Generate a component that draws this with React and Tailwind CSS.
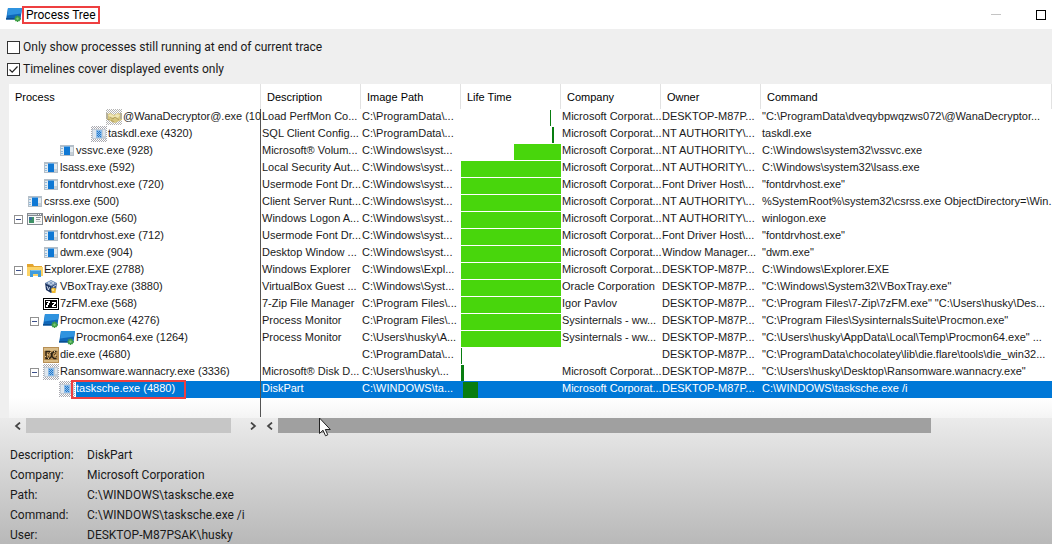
import React from "react";

const MS = "Microsoft Corporat...";
const NT = "NT AUTHORITY\\...";
const DESK = "DESKTOP-M87P...";
const SYST = "C:\\Windows\\syst...";

// bar: [start %, width %] of the displayed time range
const rows = [
  { level: 5, icon: "hands", name: "@WanaDecryptor@.exe (10", desc: "Load PerfMon Co...", path: "C:\\ProgramData\\...", bar: [89, 1], dark: true, company: MS, owner: DESK, cmd: "\"C:\\ProgramData\\dveqybpwqzws072\\@WanaDecryptor..." },
  { level: 4, icon: "ghost", name: "taskdl.exe (4320)", desc: "SQL Client Config...", path: "C:\\ProgramData\\...", bar: [91, 2], dark: true, company: MS, owner: NT, cmd: "taskdl.exe" },
  { level: 2, icon: "app", name: "vssvc.exe (928)", desc: "Microsoft® Volum...", path: SYST, bar: [53, 47], company: MS, owner: NT, cmd: "C:\\Windows\\system32\\vssvc.exe" },
  { level: 1, icon: "app", name: "lsass.exe (592)", desc: "Local Security Aut...", path: SYST, bar: [0, 100], company: MS, owner: NT, cmd: "C:\\Windows\\system32\\lsass.exe" },
  { level: 1, icon: "app", name: "fontdrvhost.exe (720)", desc: "Usermode Font Dr...", path: SYST, bar: [0, 100], company: MS, owner: "Font Driver Host\\...", cmd: "\"fontdrvhost.exe\"" },
  { level: 0, icon: "app", name: "csrss.exe (500)", desc: "Client Server Runt...", path: SYST, bar: [0, 100], company: MS, owner: NT, cmd: "%SystemRoot%\\system32\\csrss.exe ObjectDirectory=\\Win..." },
  { level: 0, open: true, icon: "logon", name: "winlogon.exe (560)", desc: "Windows Logon A...", path: SYST, bar: [0, 100], company: MS, owner: NT, cmd: "winlogon.exe" },
  { level: 1, icon: "app", name: "fontdrvhost.exe (712)", desc: "Usermode Font Dr...", path: SYST, bar: [0, 100], company: MS, owner: "Font Driver Host\\...", cmd: "\"fontdrvhost.exe\"" },
  { level: 1, icon: "app", name: "dwm.exe (904)", desc: "Desktop Window ...", path: SYST, bar: [0, 100], company: MS, owner: "Window Manager...", cmd: "\"dwm.exe\"" },
  { level: 0, open: true, icon: "folder", name: "Explorer.EXE (2788)", desc: "Windows Explorer", path: "C:\\Windows\\Expl...", bar: [0, 100], company: MS, owner: DESK, cmd: "C:\\Windows\\Explorer.EXE" },
  { level: 1, icon: "vbox", name: "VBoxTray.exe (3880)", desc: "VirtualBox Guest ...", path: "C:\\Windows\\Syst...", bar: [0, 100], company: "Oracle Corporation", owner: DESK, cmd: "\"C:\\Windows\\System32\\VBoxTray.exe\"" },
  { level: 1, icon: "zip", name: "7zFM.exe (568)", desc: "7-Zip File Manager", path: "C:\\Program Files\\...", bar: [0, 100], company: "Igor Pavlov", owner: DESK, cmd: "\"C:\\Program Files\\7-Zip\\7zFM.exe\" \"C:\\Users\\husky\\Des..." },
  { level: 1, open: true, icon: "procmon", name: "Procmon.exe (4276)", desc: "Process Monitor", path: "C:\\Program Files\\...", bar: [0, 100], company: "Sysinternals - ww...", owner: DESK, cmd: "\"C:\\Program Files\\SysinternalsSuite\\Procmon.exe\"" },
  { level: 2, icon: "procmon", name: "Procmon64.exe (1264)", desc: "Process Monitor", path: "C:\\Users\\husky\\A...", bar: [0, 100], company: "Sysinternals - ww...", owner: DESK, cmd: "\"C:\\Users\\husky\\AppData\\Local\\Temp\\Procmon64.exe\" ..." },
  { level: 1, icon: "die", name: "die.exe (4680)", desc: "", path: "C:\\ProgramData\\...", bar: [0, 1], dark: true, company: "", owner: DESK, cmd: "\"C:\\ProgramData\\chocolatey\\lib\\die.flare\\tools\\die_win32..." },
  { level: 1, open: true, icon: "ghost", name: "Ransomware.wannacry.exe (3336)", desc: "Microsoft® Disk D...", path: "C:\\Users\\husky\\...", bar: [0, 3], dark: true, company: MS, owner: DESK, cmd: "\"C:\\Users\\husky\\Desktop\\Ransomware.wannacry.exe\"" },
  { level: 2, icon: "ghost", selected: true, name: "tasksche.exe (4880)", desc: "DiskPart", path: "C:\\WINDOWS\\ta...", bar: [2, 15], dark: true, company: MS, owner: DESK, cmd: "C:\\WINDOWS\\tasksche.exe /i" },
];

const indents = ["pl-[18px]", "pl-[34px]", "pl-[50px]", "pl-[66px]", "pl-[82px]", "pl-[97px]"];

function Dither() {
  return (
    <>
      <defs>
        <pattern id="dither" width="2" height="2" patternUnits="userSpaceOnUse">
          <path fill="#fff" d="M0 0h1v1H0zM1 1h1v1H1z" />
        </pattern>
      </defs>
      <path fill="url(#dither)" d="M0 0h16v16H0z" />
    </>
  );
}

function Icon({ kind }) {
  return (
    <svg className="size-4 shrink-0" viewBox="0 0 16 16" shapeRendering="crispEdges" aria-hidden="true">
      {kind === "app" && (
        <>
          <path fill="#b4bfc9" d="M1 2h14v11H1z" />
          <path fill="#e3ebf1" d="M2 4h3v8H2zM11 4h3v5h-3z" />
          <path fill="#8fb9dc" d="M2 5h2v1H2zM2 8h2v1H2zM2 10h2v1H2z" />
          <path fill="#c5ced6" d="M11 9h3v3h-3z" />
          <path fill="#0f78d4" d="M5 4h6v8H5z" />
          <path fill="#6aa9e0" d="M5 3h6v1H5z" />
        </>
      )}
      {kind === "ghost" && (
        <>
          <path fill="#a9a9b0" d="M0 0h16v16H0z" />
          <Dither />
          <path fill="#c3ccd6" d="M1 3h14v10H1z" />
          <path fill="#dfe7ee" d="M2 4h3v8H2zM12 4h2v6h-2z" />
          <path fill="#8ebce8" d="M5 4h6v8H5z" />
          <path fill="#1f78cc" d="M6 5h1v1H6zM8 5h1v1H8zM7 6h1v1H7zM9 6h1v1H9zM6 7h1v1H6zM8 7h1v1H8zM7 8h1v1H7zM9 8h1v1H9zM6 9h1v1H6zM8 9h1v1H8zM7 10h1v1H7zM9 10h1v1H9z" />
        </>
      )}
      {kind === "hands" && (
        <g shapeRendering="auto">
          <path fill="#b4b4b4" d="M0 0h16v16H0z" />
          <Dither />
          <path fill="#d6c67e" d="M0 6l4-2 4 2 4-2 4 2v5l-3 1-4 2-3-1-3-2-3-1z" />
          <path fill="#efe6b4" d="M2 6l3-1 3 2 3-2 3 1-2 3-4-1-3 1z" />
          <path stroke="#a08e50" strokeWidth=".7" fill="none" d="M4 8l3 2 2-2 4 3M5 11l3 2M1 10l3 1" />
          <path fill="#b5b09a" d="M0 4h2v6H0zM14 4h2v6h-2z" />
        </g>
      )}
      {kind === "logon" && (
        <>
          <path fill="#858b91" d="M0 2h16v12H0z" />
          <path fill="#f8f8f8" d="M1 5h14v8H1z" />
          <path fill="#d3d8dc" d="M1 3h9v1H1z" />
          <path fill="#fff" d="M11 3h1v1h-1zM13 3h1v1h-1z" />
          <path fill="#3e9166" d="M2 6h5v6H2z" />
          <path fill="#376f9b" d="M2 6h3v3H2z" />
          <path fill="#8b9197" d="M9 6h5v1H9zM9 8h4v1H9z" />
          <path fill="#cdd1d4" d="M9 10h5v1H9z" />
        </>
      )}
      {kind === "folder" && (
        <g shapeRendering="auto">
          <path fill="#e3a52f" d="M0 2h6l1 2h8v3H0z" />
          <path fill="#fbd367" d="M0 5h16v9H0z" />
          <path fill="#3f9bdc" d="M3 9q0-1 1-1h9q1 0 1 1v6h-3v-3H6v3H3z" />
          <path fill="#77bdec" d="M4 8h9v1H4z" />
        </g>
      )}
      {kind === "vbox" && (
        <g shapeRendering="auto">
          <path fill="#7291ba" d="M8 1l6 3-6 3-6-3z" />
          <path fill="#1d3562" d="M2 4l6 3v7l-5-3z" />
          <path fill="#3b5687" d="M14 4L8 7v7l5-3z" />
          <path stroke="#d9e3f2" strokeWidth=".9" fill="none" d="M4 7l1.500 4L6.500 8M5 4l3-1.500L11 4 8 5.500zM10 8l3-2" />
          <path fill="#f0bb2f" d="M8 10l2-1.500 3 1L12.500 14H9z" />
          <path fill="#fbe187" d="M9 10h2v2H9z" />
        </g>
      )}
      {kind === "zip" && (
        <>
          <path d="M0 2h16v12H0z" />
          <path fill="#fff" d="M1 3h14v10H1z" />
          <path d="M2 4h12v8H2z" />
          <path fill="#fff" d="M3 5h4v2H6v2H5v2H3V9h1V7h1V6H3zM9 6h4v2h-1v1h-1v1h2v1H9V9h1V8h1V7H9z" />
        </>
      )}
      {kind === "procmon" && (
        <g shapeRendering="auto">
          <path fill="#0f66b8" d="M2 1h14l-1.500 11.500H0z" />
          <path fill="#2f93df" d="M2 1h14l-.8 5.500L1.200 8.500z" />
          <path fill="#0b4f91" d="M.2 11h14.500l-.2 1.500H0z" />
          <path stroke="#3f9f45" strokeWidth="1.500" d="M11.500 8.500v6.500M8.500 11.700h6.500M9.300 9.500l4.400 4.400M13.700 9.500l-4.400 4.400" />
          <circle cx="11.500" cy="11.700" r="1.200" fill="#7cc67c" />
        </g>
      )}
      {kind === "die" && (
        <>
          <path fill="#b78f55" d="M0 0h16v16H0z" />
          <path fill="#d9bb85" d="M1 1h14v3H1zM1 13h14v2H1z" />
          <path fill="none" stroke="#2a2115" strokeWidth="1.400" shapeRendering="auto" d="M3 4.500h3.500l2 2v3l-2 2H3zM13.500 4.500H11l-2 2v3l2 2h2.500" />
          <path fill="#dec799" d="M4 7h1v1H4zM7 5h1v1H7zM11 4h1v1h-1zM12 8h1v1h-1zM5 11h1v1H5zM2 9h1v1H2z" />
          <path fill="#5b4527" d="M5 6h1v1H5zM5 9h1v1H5zM11 7h1v1h-1zM13 9h1v1h-1zM12 6h1v1h-1z" />
        </>
      )}
    </svg>
  );
}

function Check({ label, defaultChecked }) {
  return (
    <label className="flex w-fit items-center gap-[3px] leading-[22px]">
      <span className="relative flex">
        <input type="checkbox" defaultChecked={defaultChecked} className="peer size-[13px] appearance-none border border-[#333] bg-white" />
        <svg className="pointer-events-none absolute inset-0 hidden size-[13px] peer-checked:block" viewBox="0 0 13 13" fill="none" stroke="#222" strokeWidth="1.200" aria-hidden="true">
          <path d="M2.500 6.500l2.700 2.700 5.300-5.700" />
        </svg>
      </span>
      {label}
    </label>
  );
}

function Arrow({ label, right }) {
  return (
    <button type="button" aria-label={label} className="flex w-[17px] shrink-0 items-center justify-center">
      <svg className="size-2" viewBox="0 0 8 8" fill="none" stroke="#444" strokeWidth="1.700" aria-hidden="true">
        <path d={right ? "M2 0.500L6 4 2 7.500" : "M6 0.500L2 4l4 3.500"} />
      </svg>
    </button>
  );
}

const details = [
  ["Description:", "DiskPart"],
  ["Company:", "Microsoft Corporation"],
  ["Path:", "C:\\WINDOWS\\tasksche.exe"],
  ["Command:", "C:\\WINDOWS\\tasksche.exe /i"],
  ["User:", "DESKTOP-M87PSAK\\husky"],
];

const cell = "p-0 pl-px align-top";

export default function App() {
  return (
    <div className="relative flex min-h-screen flex-col overflow-hidden bg-[#efefef] font-['Roboto','Open_Sans',sans-serif] text-[12px] text-[#1a1a1a]">
      <header className="flex h-[29px] items-center bg-white pl-1.5">
        <Icon kind="procmon" />
        <h1 className="border-2 border-[#ee3f40] px-0.5 leading-[14px] text-black">Process Tree</h1>
        <div className="ml-auto flex items-center gap-[35px] pr-1.5">
          <button type="button" aria-label="Minimize" className="flex h-4 items-center">
            <span className="h-px w-2.5 bg-[#c4c4c4]" />
          </button>
          <button type="button" aria-label="Maximize" className="size-2.5 border border-black" />
        </div>
      </header>

      <div className="px-[7px] pt-[7px] pb-1">
        <Check label="Only show processes still running at end of current trace" />
        <Check label="Timelines cover displayed events only" defaultChecked />
      </div>

      <div className="pl-[9px]">
        <table className="w-full table-fixed border-separate border-spacing-0 bg-white text-left font-['Liberation_Sans',Arial,sans-serif] text-[11px] leading-[14px] whitespace-nowrap">
          <colgroup>
            <col className="w-[252px]" />
            <col className="w-[100px]" />
            <col className="w-[100px]" />
            <col className="w-[100px]" />
            <col className="w-[100px]" />
            <col className="w-[100px]" />
            <col />
          </colgroup>
          <thead>
            <tr className="h-[25px]">
              {["Process", "Description", "Image Path", "Life Time", "Company", "Owner", "Command"].map((h) => (
                <th key={h} className="border-r border-[#e2e2e2] p-0 pl-[6px] font-normal text-black">{h}</th>
              ))}
            </tr>
          </thead>
          <tbody>
            {rows.map((r, i) => (
              <tr key={i} className={r.selected ? "h-[17px] bg-[#0078d7] text-white" : "h-[17px]"}>
                <td className="border-r border-[#555] bg-white p-0">
                  <div className={`flex h-[17px] items-start ${indents[r.level]}`}>
                    {r.open && (
                      <button type="button" aria-label={`Collapse ${r.name}`} className="mt-1 -ml-[13px] mr-1 flex size-[9px] shrink-0 items-center justify-center border border-[#919191] bg-white">
                        <span className="h-px w-[5px] bg-[#3b4f8a]" />
                      </button>
                    )}
                    <Icon kind={r.icon} />
                    {r.selected ? (
                      <span className="relative ml-px h-[17px] flex-1 bg-[#0078d7]">
                        {r.name}
                        <span className="absolute -top-px -left-[5px] h-[19px] w-[115px] border-2 border-[#ee3f40]" />
                      </span>
                    ) : (
                      <span className="ml-px">{r.name}</span>
                    )}
                  </div>
                </td>
                <td className={cell}>{r.desc}</td>
                <td className={cell}>{r.path}</td>
                <td className="p-0">
                  <div className="h-[17px] pt-px">
                    <div className={r.dark ? "h-4 bg-[#087d10]" : "h-4 bg-[#48d60c]"} style={{ marginLeft: `${r.bar[0]}%`, width: `${r.bar[1]}%` }} />
                  </div>
                </td>
                <td className={cell}>{r.company}</td>
                <td className={cell}>{r.owner}</td>
                <td className={cell}>{r.cmd}</td>
              </tr>
            ))}
          </tbody>
        </table>
        <div className="h-5 bg-linear-to-b from-white to-[#f4f4f4]">
          <div className="h-[19px] w-[252px] border-r border-[#555]" />
        </div>
      </div>

      <div className="flex-1 bg-linear-to-b from-[#ebebeb] to-[#b8b8b8]">
        <div className="flex h-[15px] pl-[9px]">
          <div className="flex w-[252px]">
            <Arrow label="Scroll processes left" />
            <div className="flex-1">
              <div className="h-full w-[205px] bg-[#c6c6c6]" />
            </div>
            <Arrow label="Scroll processes right" right />
          </div>
          <Arrow label="Scroll details left" />
          <div className="flex-1">
            <div className="h-full w-[84.4%] bg-[#a0a0a0]" />
          </div>
        </div>
        <dl className="mt-3 grid grid-cols-[77px_1fr] pl-2.5 leading-5">
          {details.map(([k, v]) => (
            <React.Fragment key={k}>
              <dt>{k}</dt>
              <dd>{v}</dd>
            </React.Fragment>
          ))}
        </dl>
      </div>

      <svg className="pointer-events-none absolute top-[417px] left-[319px] h-5 w-3" viewBox="0 0 12 20" aria-hidden="true">
        <path d="M.5 1v15.500l3.500-3.300 2.500 5.600 2.300-1-2.500-5.300h5z" fill="#fff" stroke="#222" />
      </svg>
    </div>
  );
}
